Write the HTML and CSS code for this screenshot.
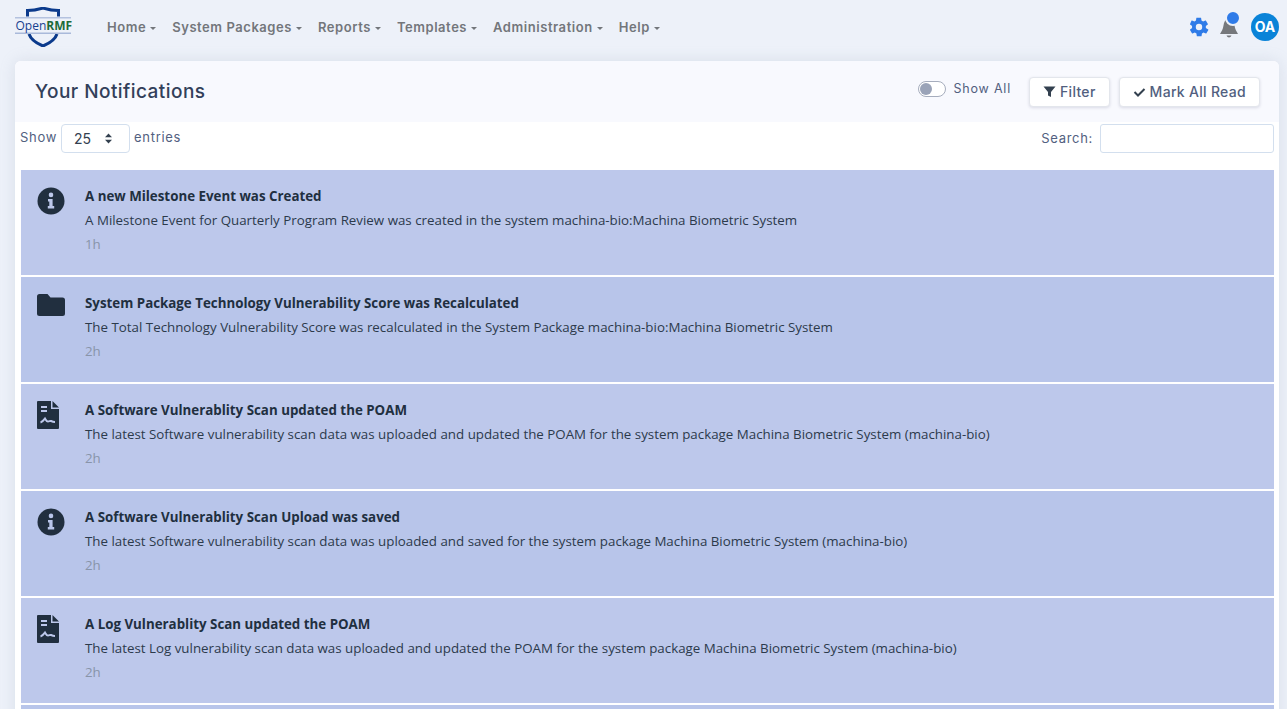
FILE: index.html
```html
<!DOCTYPE html>
<html lang="en">
<head>
    <meta charset="UTF-8">
    <title>Your Notifications</title>
    <link rel="stylesheet" href="styles.css">
</head>
<body>

<nav class="navbar">
    <svg class="logo" width="60" height="40" viewBox="0 0 60 40">
        <path d="M13.500 9.500V3.500C19 3.500 24 2.500 29 1C34 2.500 39 3.500 44.500 3.500V9.500" fill="none" stroke="#0b3a8c" stroke-width="3"/>
        <path d="M15 27C17 33 23 36.500 29 39C35 36.500 41 33 43 27" fill="none" stroke="#0b3a8c" stroke-width="3"/>
        <rect x="1" y="10" width="56" height="1.500" fill="#b4c2df"/>
        <rect x="1" y="25.500" width="56" height="1.500" fill="#a9b9da"/>
        <text x="1.500" y="23" class="logo-open">Open<tspan class="logo-rmf">RMF</tspan></text>
    </svg>
    <ul class="nav-links">
        <li class="nav-link">Home</li>
        <li class="nav-link">System Packages</li>
        <li class="nav-link">Reports</li>
        <li class="nav-link">Templates</li>
        <li class="nav-link">Administration</li>
        <li class="nav-link">Help</li>
    </ul>
    <div class="nav-icons">
        <svg class="gear" width="22" height="22" viewBox="0 0 24 24">
            <path fill="#2f7be8" fill-rule="evenodd" d="M19.4 13c.1-.3.1-.7.1-1s0-.7-.1-1l2.2-1.700c.2-.2.2-.4.1-.6l-2.100-3.600c-.1-.2-.4-.3-.6-.2l-2.600 1c-.5-.4-1.100-.7-1.700-1l-.4-2.700c0-.2-.2-.4-.5-.4h-4.200c-.3 0-.5.2-.5.4l-.4 2.700c-.6.3-1.200.6-1.700 1l-2.600-1c-.2-.1-.5 0-.6.2L2.200 8.700c-.1.2-.1.4.1.6L4.500 11c-.1.3-.1.7-.1 1s0 .7.1 1l-2.200 1.700c-.2.2-.2.4-.1.6l2.100 3.600c.1.2.4.3.6.2l2.600-1c.5.4 1.100.7 1.700 1l.4 2.700c0 .2.2.4.5.4h4.200c.3 0 .5-.2.5-.4l.4-2.700c.6-.3 1.200-.6 1.700-1l2.600 1c.2.1.5 0 .6-.2l2.100-3.600c.1-.2.1-.4-.1-.6L19.400 13zM12 15.500a3.500 3.500 0 1 1 0-7 3.500 3.500 0 0 1 0 7z"/>
        </svg>
        <div class="bell">
            <svg width="20" height="22" viewBox="0 0 20 22">
                <path fill="#76787c" d="M8 3C6 4 5 6.500 4.500 9.500C4 13 2.500 15.500 1 18H19C17.500 15.500 16 13 15.500 9.500C15 6.500 14 4 12 3zM7.500 19.500C8 20.800 9 21.500 10 21.500S12 20.800 12.500 19.500z"/>
            </svg>
            <span class="bell-dot"></span>
        </div>
        <div class="avatar">OA</div>
    </div>
</nav>

<div class="card">
    <div class="card-header">
        <h3>Your Notifications</h3>
        <div class="header-actions">
            <label class="show-all"><span class="switch"></span>Show All</label>
            <button class="button">
                <svg width="13" height="13" viewBox="0 0 13 13"><path fill="#33404f" d="M.5 1.500h12L8 7v5L5 10.500V7z"/></svg>
                Filter
            </button>
            <button class="button">
                <svg width="13" height="13" viewBox="0 0 13 13"><path fill="none" stroke="#33404f" stroke-width="2" d="M1.500 7l3.500 3.500L11.500 4"/></svg>
                Mark All Read
            </button>
        </div>
    </div>

    <div class="table-controls">
        <div class="entries">
            Show
            <div class="entries-select">
                25
                <svg width="9" height="11" viewBox="0 0 9 11"><path fill="#33404f" d="M4.500.500L8 4.200H1zM4.500 10.500L1 6.800h7z"/></svg>
            </div>
            entries
        </div>
        <div class="search">
            Search:
            <input type="text" class="search-input">
        </div>
    </div>

    <ul class="notifications">
        <li class="notification">
            <div class="notification-icon">
                <svg width="28" height="28" viewBox="0 0 28 28"><circle cx="14" cy="14" r="13.500" fill="#212f3f"/><path fill="#bdc8eb" d="M14 5.600a2.300 2.300 0 1 1 0 4.600 2.300 2.300 0 0 1 0-4.600zM11 12h4.600v7H17.200v2.400h-6.400V19h1.500v-4.600H11z"/></svg>
            </div>
            <div>
                <div class="notification-title">A new Milestone Event was Created</div>
                <div class="notification-text">A Milestone Event for Quarterly Program Review was created in the system machina-bio:Machina Biometric System</div>
                <div class="notification-time">1h</div>
            </div>
        </li>
        <li class="notification">
            <div class="notification-icon">
                <svg width="28" height="22" viewBox="0 0 28 22"><path fill="#212f3f" d="M2.500 0h8l3 3.500h12A2.500 2.500 0 0 1 28 6v13.500a2.500 2.500 0 0 1-2.500 2.500h-23A2.500 2.500 0 0 1 0 19.500v-17A2.500 2.500 0 0 1 2.500 0z"/></svg>
            </div>
            <div>
                <div class="notification-title">System Package Technology Vulnerability Score was Recalculated</div>
                <div class="notification-text">The Total Technology Vulnerability Score was recalculated in the System Package machina-bio:Machina Biometric System</div>
                <div class="notification-time">2h</div>
            </div>
        </li>
        <li class="notification">
            <div class="notification-icon">
                <svg width="22" height="28" viewBox="0 0 22 28"><path fill="#212f3f" d="M1 0h13v8h8v19a1 1 0 0 1-1 1H1a1 1 0 0 1-1-1V1a1 1 0 0 1 1-1zM15.500 0L22 6.500h-6.500z"/><path fill="none" stroke="#bdc8eb" stroke-width="2" d="M4 6h6M4 10h6M3.500 21.500c2-.5 3-2 4.500-4 1 1.500 1.500 3 3 3s2-1 3-.5 2 1 4 1"/></svg>
            </div>
            <div>
                <div class="notification-title">A Software Vulnerablity Scan updated the POAM</div>
                <div class="notification-text">The latest Software vulnerability scan data was uploaded and updated the POAM for the system package Machina Biometric System (machina-bio)</div>
                <div class="notification-time">2h</div>
            </div>
        </li>
        <li class="notification">
            <div class="notification-icon">
                <svg width="28" height="28" viewBox="0 0 28 28"><circle cx="14" cy="14" r="13.500" fill="#212f3f"/><path fill="#b8c5ea" d="M14 5.600a2.300 2.300 0 1 1 0 4.600 2.300 2.300 0 0 1 0-4.600zM11 12h4.600v7H17.200v2.400h-6.400V19h1.500v-4.600H11z"/></svg>
            </div>
            <div>
                <div class="notification-title">A Software Vulnerablity Scan Upload was saved</div>
                <div class="notification-text">The latest Software vulnerability scan data was uploaded and saved for the system package Machina Biometric System (machina-bio)</div>
                <div class="notification-time">2h</div>
            </div>
        </li>
        <li class="notification">
            <div class="notification-icon">
                <svg width="22" height="28" viewBox="0 0 22 28"><path fill="#212f3f" d="M1 0h13v8h8v19a1 1 0 0 1-1 1H1a1 1 0 0 1-1-1V1a1 1 0 0 1 1-1zM15.500 0L22 6.500h-6.500z"/><path fill="none" stroke="#bdc8eb" stroke-width="2" d="M4 6h6M4 10h6M3.500 21.500c2-.5 3-2 4.500-4 1 1.500 1.500 3 3 3s2-1 3-.5 2 1 4 1"/></svg>
            </div>
            <div>
                <div class="notification-title">A Log Vulnerablity Scan updated the POAM</div>
                <div class="notification-text">The latest Log vulnerability scan data was uploaded and updated the POAM for the system package Machina Biometric System (machina-bio)</div>
                <div class="notification-time">2h</div>
            </div>
        </li>
        <li class="notification"></li>
    </ul>
</div>

</body>
</html>
```

FILE: styles.css
```css
html, body {
    height: 100%;
    overflow: hidden;
}

body {
    margin: 0;
    background-color: #edf1f9;
    font-family: 'Inter', 'Liberation Sans', sans-serif;
    color: #525f7f;
}

ul {
    list-style-type: none;
    margin: 0;
    padding: 0;
}

.navbar {
    display: flex;
    align-items: center;
    height: 61px;
    padding: 0 8px 7px 14px;
    box-sizing: border-box;
}

.logo {
    flex-shrink: 0;
}

.logo-open {
    font-family: 'Open Sans', sans-serif;
    font-size: 12px;
    fill: #17408f;
}

.logo-rmf {
    font-weight: 700;
    fill: #1c6b3a;
}

.nav-links {
    display: flex;
    gap: 16px;
    margin-left: 33px;
}

.nav-link {
    font-size: 13px;
    font-weight: 600;
    letter-spacing: 0.55px;
    color: #73767b;
}

.nav-link::after {
    content: "";
    display: inline-block;
    margin-left: 4px;
    vertical-align: 2px;
    border-top: 3px solid #73767b;
    border-left: 3px solid transparent;
    border-right: 3px solid transparent;
}

.nav-icons {
    display: flex;
    align-items: center;
    margin-left: auto;
}

.gear {
    margin-right: 9px;
}

.bell {
    position: relative;
    height: 22px;
    margin-right: 12px;
}

.bell-dot {
    position: absolute;
    top: -6px;
    left: 6px;
    width: 12px;
    height: 12px;
    border-radius: 50%;
    background-color: #2f7be8;
    border: 2px solid #edf1f9;
}

.avatar {
    width: 28px;
    height: 28px;
    line-height: 28px;
    border-radius: 50%;
    background-color: #0a83d8;
    color: #fff;
    font-size: 14px;
    font-weight: 700;
    text-align: center;
}

.card {
    margin: 0 8px 0 15px;
    background-color: #fff;
    border-radius: 6px 6px 0 0;
    box-shadow: 0 0 16px rgba(136, 152, 170, 0.2);
}

.card-header {
    display: flex;
    align-items: center;
    justify-content: space-between;
    height: 61px;
    padding: 0 19px 0 20px;
    background-color: #f8f9fe;
    border-radius: 6px 6px 0 0;
}

.card-header h3 {
    margin: 0;
    font-size: 19px;
    font-weight: 500;
    letter-spacing: 0.45px;
    color: #32405a;
}

.header-actions {
    display: flex;
    align-items: center;
}

.show-all {
    display: flex;
    align-items: center;
    gap: 8px;
    margin-right: 9px;
    margin-top: -6px;
    font-size: 12.500px;
    letter-spacing: 0.8px;
}

.switch {
    position: relative;
    width: 26px;
    height: 14px;
    border: 1px solid #a6adbd;
    border-radius: 8px;
    background-color: #fff;
}

.switch::before {
    content: "";
    position: absolute;
    top: 1px;
    left: 1px;
    width: 12px;
    height: 12px;
    border-radius: 50%;
    background-color: #9aa3b8;
}

.button {
    display: flex;
    align-items: center;
    gap: 4px;
    height: 30px;
    margin-left: 9px;
    padding: 0 13px;
    border: 1px solid #e3e6ec;
    border-radius: 4px;
    background-color: #fff;
    box-shadow: 0 1px 3px rgba(50, 50, 93, 0.15);
    font-family: inherit;
    font-size: 14px;
    font-weight: 500;
    letter-spacing: 0.3px;
    color: #525f7f;
}

.table-controls {
    display: flex;
    justify-content: space-between;
    height: 46px;
    padding: 2px 5px 0;
    font-size: 13px;
    letter-spacing: 0.7px;
}

.entries, .search {
    display: flex;
    align-items: flex-start;
    gap: 4px;
    line-height: 28px;
}

.entries {
    line-height: 26px;
}

.entries-select {
    display: flex;
    align-items: center;
    justify-content: space-between;
    box-sizing: border-box;
    width: 69px;
    height: 29px;
    padding: 0 16px 0 12px;
    border: 1px solid #d3dfee;
    border-radius: 4px;
    font-size: 14px;
    letter-spacing: 0;
    color: #33404f;
}

.search {
    gap: 7px;
}

.search-input {
    box-sizing: border-box;
    width: 174px;
    height: 29px;
    border: 1px solid #d3dfee;
    border-radius: 3px;
}

.notifications {
    display: flex;
    flex-direction: column;
    gap: 2px;
    margin: 0 5px 0 6px;
}

.notification {
    display: flex;
    box-sizing: border-box;
    height: 105px;
    padding: 17px 16px 0 16px;
    background-color: #bdc8eb;
    font-family: 'Open Sans', sans-serif;
}

.notification:nth-child(even) {
    background-color: #b8c5ea;
}

.notification-icon {
    flex-shrink: 0;
    width: 28px;
    margin-right: 20px;
}

.notification-title {
    font-size: 13.330px;
    font-weight: 700;
    line-height: 18px;
    color: #212f3f;
}

.notification-text {
    margin-top: 6px;
    font-size: 13.330px;
    line-height: 18px;
    color: #2c3a4b;
}

.notification-time {
    margin-top: 6px;
    font-size: 13.330px;
    line-height: 18px;
    color: #8894a9;
}
```
